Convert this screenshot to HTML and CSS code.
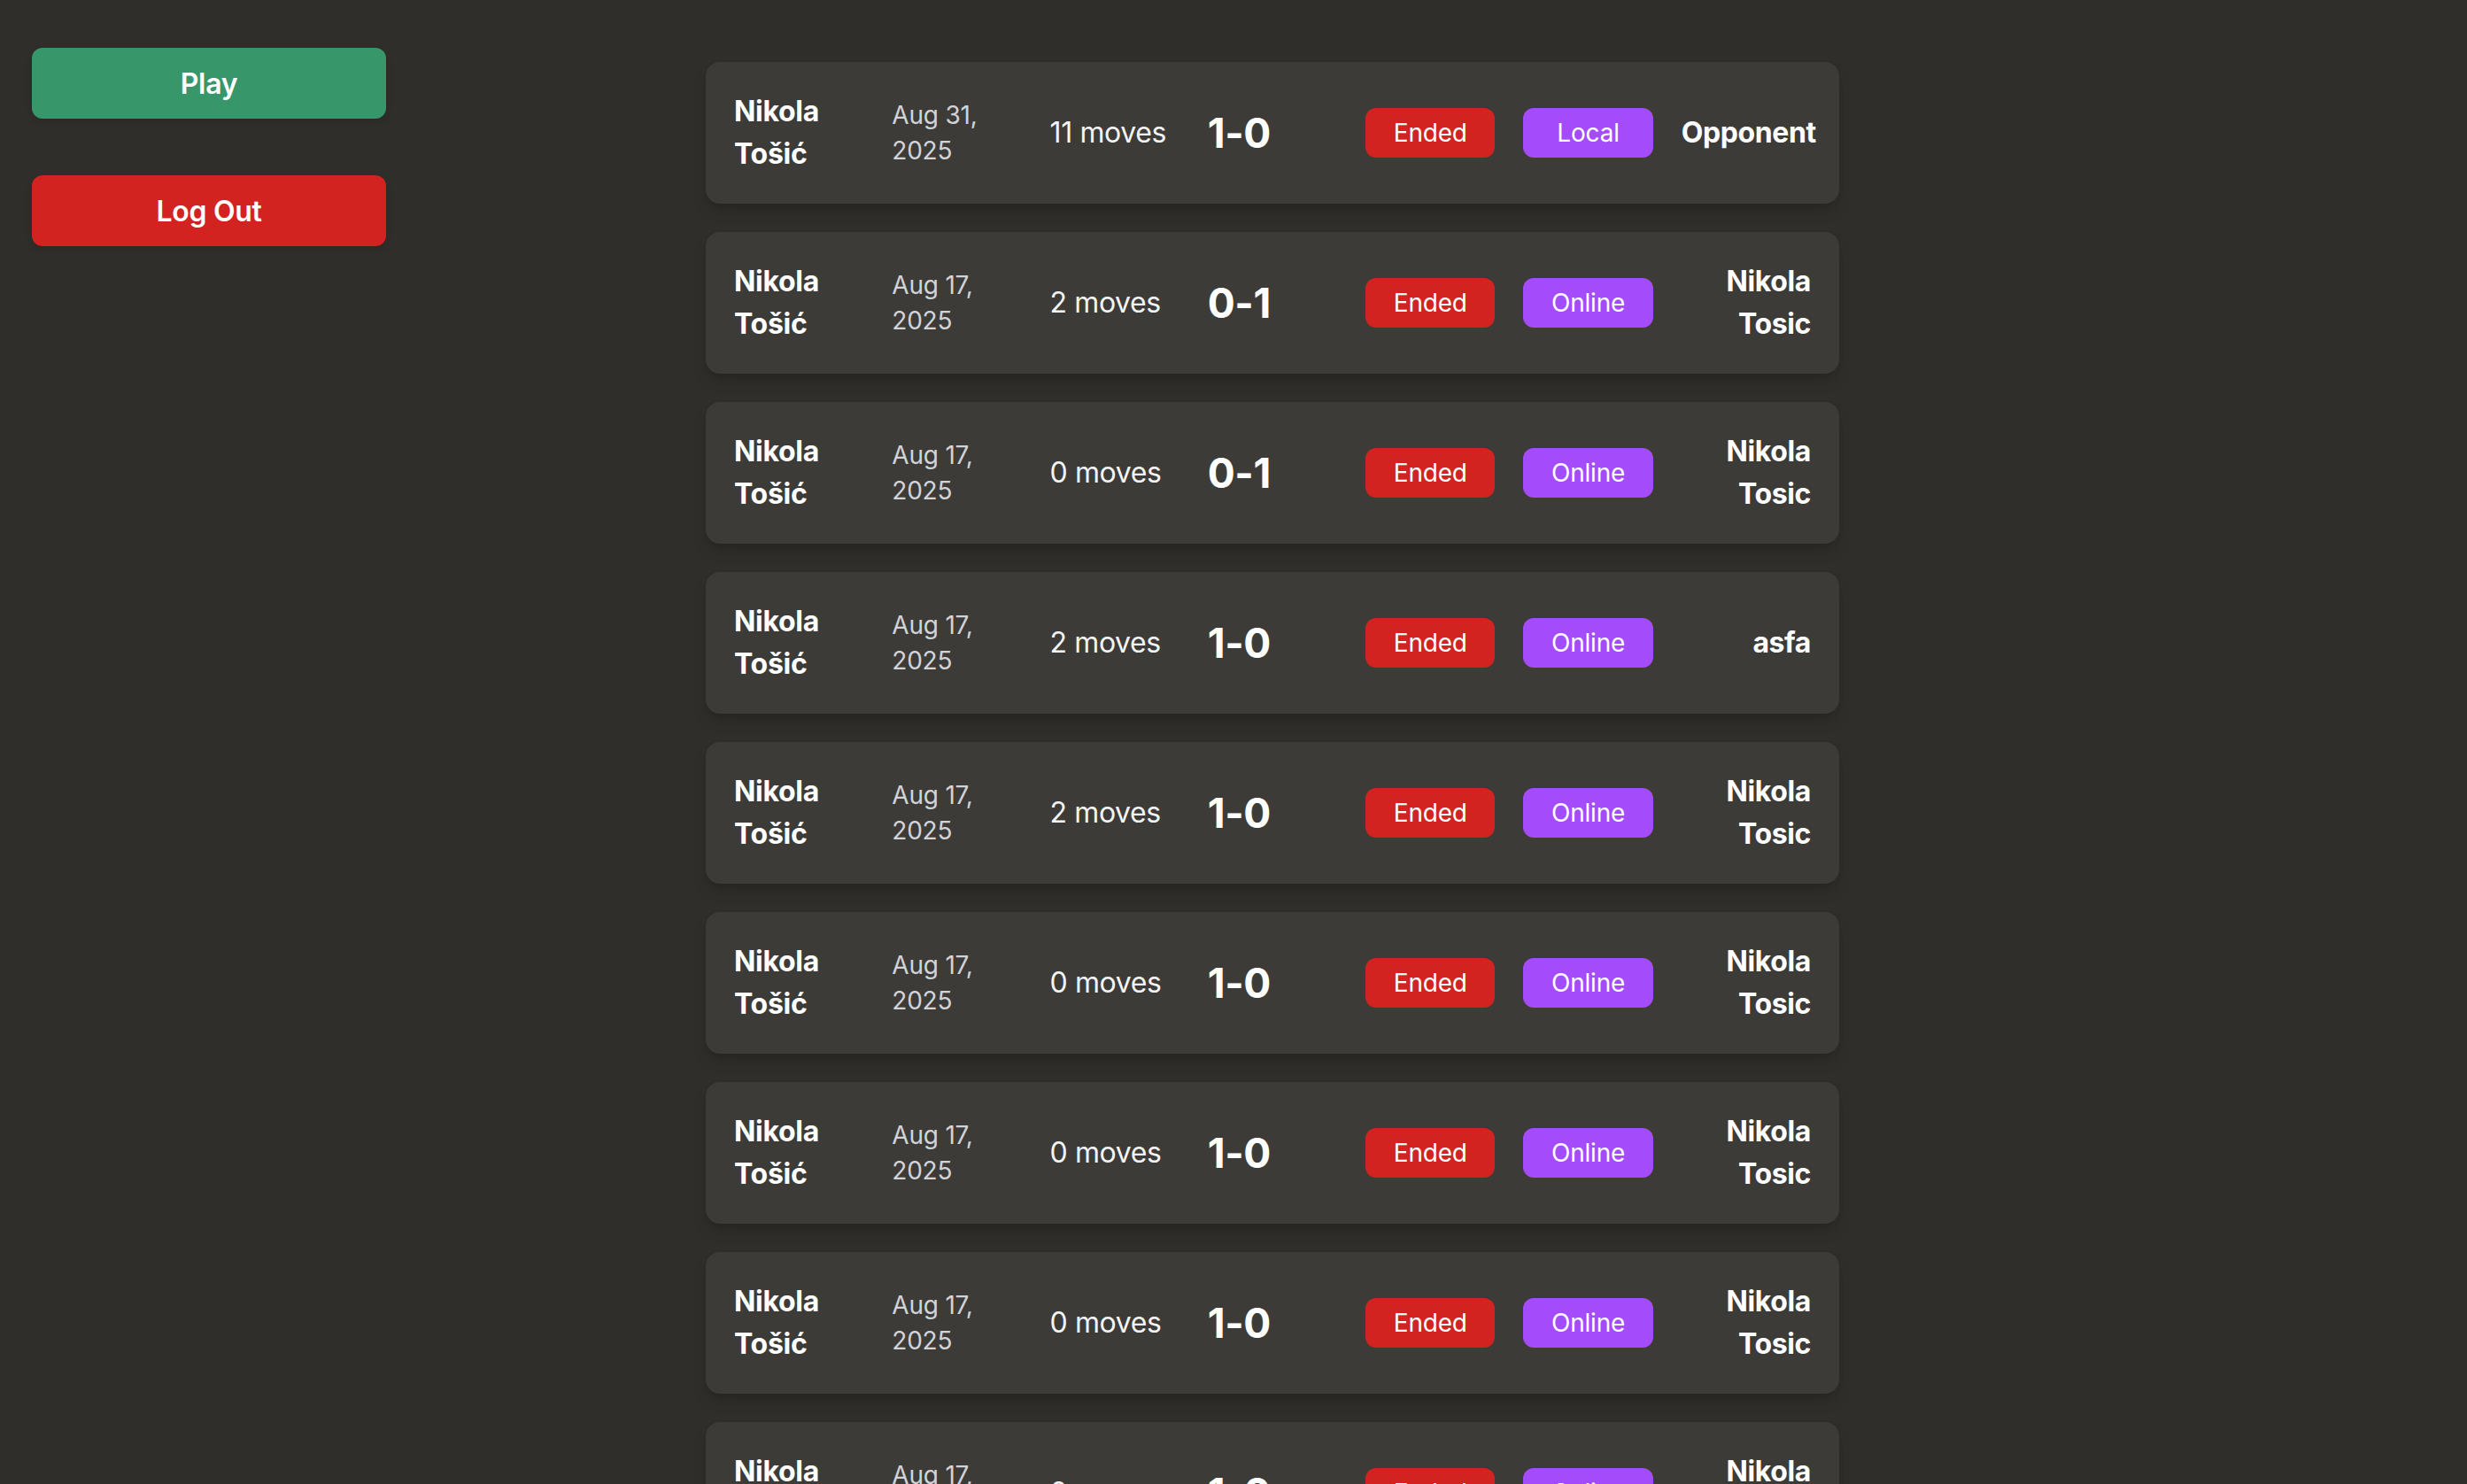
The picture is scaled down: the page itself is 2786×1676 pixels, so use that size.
FILE: index.html
```html
<!DOCTYPE html>
<html lang="en">
<head>
<meta charset="utf-8">
<title>Games</title>
<link rel="stylesheet" href="styles.css">
</head>
<body>
<div class="layout">
  <aside class="sidebar">
    <button class="btn btn-play">Play</button>
    <button class="btn btn-logout">Log Out</button>
  </aside>
  <main class="games">
    <div class="game">
      <div class="player">Nikola Tošić</div>
      <div class="date">Aug 31, 2025</div>
      <div class="moves">11 moves</div>
      <div class="score">1-0</div>
      <div class="badge badge-ended">Ended</div>
      <div class="badge badge-mode">Local</div>
      <div class="opponent">Opponent</div>
    </div>
    <div class="game">
      <div class="player">Nikola Tošić</div>
      <div class="date">Aug 17, 2025</div>
      <div class="moves">2 moves</div>
      <div class="score">0-1</div>
      <div class="badge badge-ended">Ended</div>
      <div class="badge badge-mode">Online</div>
      <div class="opponent">Nikola Tosic</div>
    </div>
    <div class="game">
      <div class="player">Nikola Tošić</div>
      <div class="date">Aug 17, 2025</div>
      <div class="moves">0 moves</div>
      <div class="score">0-1</div>
      <div class="badge badge-ended">Ended</div>
      <div class="badge badge-mode">Online</div>
      <div class="opponent">Nikola Tosic</div>
    </div>
    <div class="game">
      <div class="player">Nikola Tošić</div>
      <div class="date">Aug 17, 2025</div>
      <div class="moves">2 moves</div>
      <div class="score">1-0</div>
      <div class="badge badge-ended">Ended</div>
      <div class="badge badge-mode">Online</div>
      <div class="opponent">asfa</div>
    </div>
    <div class="game">
      <div class="player">Nikola Tošić</div>
      <div class="date">Aug 17, 2025</div>
      <div class="moves">2 moves</div>
      <div class="score">1-0</div>
      <div class="badge badge-ended">Ended</div>
      <div class="badge badge-mode">Online</div>
      <div class="opponent">Nikola Tosic</div>
    </div>
    <div class="game">
      <div class="player">Nikola Tošić</div>
      <div class="date">Aug 17, 2025</div>
      <div class="moves">0 moves</div>
      <div class="score">1-0</div>
      <div class="badge badge-ended">Ended</div>
      <div class="badge badge-mode">Online</div>
      <div class="opponent">Nikola Tosic</div>
    </div>
    <div class="game">
      <div class="player">Nikola Tošić</div>
      <div class="date">Aug 17, 2025</div>
      <div class="moves">0 moves</div>
      <div class="score">1-0</div>
      <div class="badge badge-ended">Ended</div>
      <div class="badge badge-mode">Online</div>
      <div class="opponent">Nikola Tosic</div>
    </div>
    <div class="game">
      <div class="player">Nikola Tošić</div>
      <div class="date">Aug 17, 2025</div>
      <div class="moves">0 moves</div>
      <div class="score">1-0</div>
      <div class="badge badge-ended">Ended</div>
      <div class="badge badge-mode">Online</div>
      <div class="opponent">Nikola Tosic</div>
    </div>
    <div class="game">
      <div class="player">Nikola Tošić</div>
      <div class="date">Aug 17, 2025</div>
      <div class="moves">0 moves</div>
      <div class="score">1-0</div>
      <div class="badge badge-ended">Ended</div>
      <div class="badge badge-mode">Online</div>
      <div class="opponent">Nikola Tosic</div>
    </div>
  </main>
</div>
</body>
</html>
```
FILE: styles.css
```css
* { box-sizing: border-box; }

html, body {
  margin: 0;
  padding: 0;
  background: #302e2a;
  color: #ffffff;
  font-family: Inter, "Noto Sans", "Liberation Sans", sans-serif;
  height: 100%;
  overflow: hidden;
}

.layout {
  display: flex;
  align-items: flex-start;
}

.sidebar {
  flex-shrink: 0;
  width: 436px;
  padding: 54px 0 0 36px;
  display: flex;
  flex-direction: column;
  gap: 64px;
}

.btn {
  width: 400px;
  height: 80px;
  border: none;
  border-radius: 12px;
  color: #ffffff;
  font-family: inherit;
  font-size: 32px;
  font-weight: 600;
  letter-spacing: -0.3px;
  box-shadow: 0 4px 8px rgba(0, 0, 0, 0.12);
  cursor: pointer;
}

.btn-play { background: #37976a; }
.btn-logout { background: #d22320; }

.games {
  padding: 70px 0 0 361px;
  display: flex;
  flex-direction: column;
  gap: 32px;
}

.game {
  width: 1280px;
  height: 160px;
  padding: 32px;
  background: #3d3b37;
  border-radius: 16px;
  box-shadow: 0 10px 18px -4px rgba(0, 0, 0, 0.18), 0 4px 8px -4px rgba(0, 0, 0, 0.12);
  display: grid;
  grid-template-columns: repeat(7, minmax(0, 1fr));
  column-gap: 32px;
  align-items: center;
  flex-shrink: 0;
}

.player {
  font-size: 32px;
  line-height: 48px;
  font-weight: 700;
  letter-spacing: -0.3px;
}

.date {
  font-size: 28px;
  line-height: 40px;
  color: #d1d3d9;
  letter-spacing: -0.2px;
}

.moves {
  font-size: 32px;
  line-height: 48px;
  color: #f3f4f6;
  white-space: nowrap;
  letter-spacing: -0.4px;
}

.score {
  font-size: 46px;
  line-height: 64px;
  font-weight: 700;
  letter-spacing: -0.5px;
}

.badge {
  font-size: 28px;
  line-height: 40px;
  padding: 8px 0;
  border-radius: 12px;
  text-align: center;
  color: #ffffff;
  letter-spacing: -0.2px;
}

.badge-ended { background: #d32321; }
.badge-mode { background: #a44bfc; }

.opponent {
  font-size: 32px;
  line-height: 48px;
  font-weight: 700;
  text-align: right;
  letter-spacing: -0.4px;
}
```
